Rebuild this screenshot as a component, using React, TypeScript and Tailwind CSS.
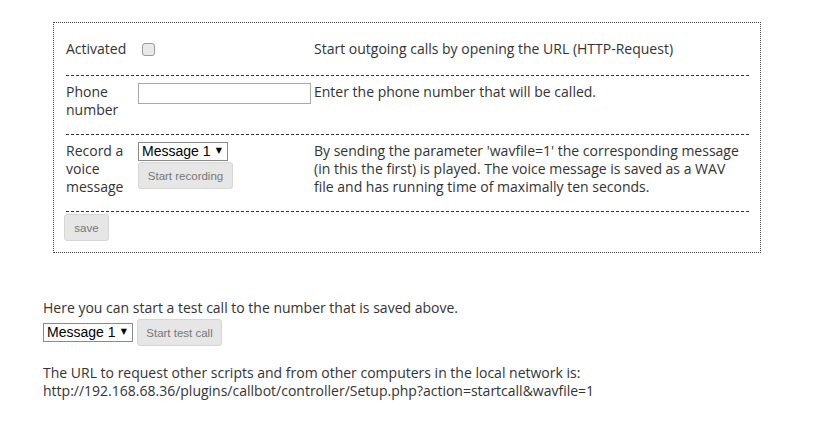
const messages = ["Message 1", "Message 2", "Message 3"];

function MessageSelect() {
  return (
    <div className="relative h-[19px] w-[90px]">
      <select
        defaultValue="Message 1"
        className="h-[19px] w-[90px] appearance-none rounded-none border border-[#8a8a8a] bg-white pl-[3px] font-['Liberation_Sans',Arial,sans-serif] text-[14px] leading-[17px] text-black outline-none"
      >
        {messages.map((m) => (
          <option key={m}>{m}</option>
        ))}
      </select>
      <span className="pointer-events-none absolute right-[6px] top-[3px] font-['DejaVu_Sans',sans-serif] text-[8px] leading-[12px] text-black">▼</span>
    </div>
  );
}

function GrayButton({ label, width }: { label: string; width: string }) {
  return (
    <button
      className={`h-[27px] ${width} rounded-[3px] border border-[#d6d6d6] bg-[#e6e6e6] font-['Liberation_Sans',Arial,sans-serif] text-[11.5px] text-[#777]`}
    >
      {label}
    </button>
  );
}

export default function App() {
  return (
    <div className="h-[423px] w-[813px] bg-white font-['Open_Sans',sans-serif] text-[14px] leading-[18px] text-[#333]">
      <div className="pl-[53px] pt-[22px]">
        <div className="h-[231px] w-[708px] border border-dotted border-[#444] pl-[12px] pr-[11px]">
          <div className="flex h-[53px] border-b border-dashed border-[#333] pt-[17px]">
            <div className="w-[72px]">Activated</div>
            <div className="w-[176px] pl-[4px] pt-[3px]">
              <input
                type="checkbox"
                className="block h-[13px] w-[13px] appearance-none rounded-[3px] border border-[#9a9a9a] bg-[#e9e9e9]"
              />
            </div>
            <div>Start outgoing calls by opening the URL (HTTP-Request)</div>
          </div>
          <div className="flex h-[59px] border-b border-dashed border-[#333] pt-[7px]">
            <div className="w-[72px]">
              Phone
              <br />
              number
            </div>
            <div className="w-[176px]">
              <input
                type="text"
                className="block h-[21px] w-[173px] border border-[#a9a9a9] bg-white outline-none"
              />
            </div>
            <div>Enter the phone number that will be called.</div>
          </div>
          <div className="flex h-[77px] border-b border-dashed border-[#333] pt-[7px]">
            <div className="w-[72px]">
              Record a
              <br />
              voice
              <br />
              message
            </div>
            <div className="flex w-[176px] flex-col items-start gap-[1px]">
              <MessageSelect />
              <GrayButton label="Start recording" width="w-[95px]" />
            </div>
            <div className="w-[430px]">
              By sending the parameter 'wavfile=1' the corresponding message (in this the first) is played. The voice
              message is saved as a WAV file and has running time of maximally ten seconds.
            </div>
          </div>
          <div className="-ml-[2px] pt-[2px]">
            <GrayButton label="save" width="w-[45px]" />
          </div>
        </div>
      </div>

      <div className="pl-[43px] pt-[46px]">
        <p>Here you can start a test call to the number that is saved above.</p>
        <div className="mt-[2px] flex items-center gap-[4px]">
          <MessageSelect />
          <GrayButton label="Start test call" width="w-[85px]" />
        </div>
        <p className="mt-[18px]">
          The URL to request other scripts and from other computers in the local network is:
          <br />
          http://192.168.68.36/plugins/callbot/controller/Setup.php?action=startcall&amp;wavfile=1
        </p>
      </div>
    </div>
  );
}
